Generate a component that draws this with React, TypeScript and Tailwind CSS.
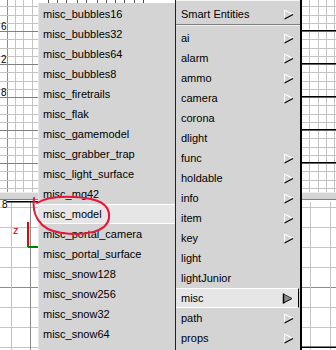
const LEFT_ITEMS = [
  "misc_bubbles16",
  "misc_bubbles32",
  "misc_bubbles64",
  "misc_bubbles8",
  "misc_firetrails",
  "misc_flak",
  "misc_gamemodel",
  "misc_grabber_trap",
  "misc_light_surface",
  "misc_mg42",
  "misc_model",
  "misc_portal_camera",
  "misc_portal_surface",
  "misc_snow128",
  "misc_snow256",
  "misc_snow32",
  "misc_snow64",
];

const RIGHT_ITEMS: { label: string; sub: boolean }[] = [
  { label: "ai", sub: true },
  { label: "alarm", sub: true },
  { label: "ammo", sub: true },
  { label: "camera", sub: true },
  { label: "corona", sub: false },
  { label: "dlight", sub: false },
  { label: "func", sub: true },
  { label: "holdable", sub: true },
  { label: "info", sub: true },
  { label: "item", sub: true },
  { label: "key", sub: true },
  { label: "light", sub: false },
  { label: "lightJunior", sub: false },
  { label: "misc", sub: true },
  { label: "path", sub: true },
  { label: "props", sub: true },
];

const fineY = Array.from({ length: 24 }, (_, k) => Math.round(6.25 + 8.25 * k)).filter((y) => y < 192);
const majorY = [31, 64, 97, 130, 163];
const lowerY = [207, 227, 247, 267, 287, 307, 327, 347];

function Arrow({ active }: { active?: boolean }) {
  if (active) {
    return (
      <svg width="11" height="11" viewBox="0 0 11 11" className="shrink-0">
        <path d="M1.5 1 L10 5.5 L1.5 10 Z" fill="#8c8c8c" />
        <path d="M1.5 0.5 V10.5" stroke="#000" strokeWidth="1.5" />
        <path d="M1.5 10 L10 5.5" stroke="#000" strokeWidth="1" />
        <path d="M1.5 1 L10 5.5" stroke="#303030" strokeWidth="1" />
      </svg>
    );
  }
  return (
    <svg width="11" height="11" viewBox="0 0 11 11" className="shrink-0">
      <path d="M1.5 1 V10" stroke="#ffffff" strokeWidth="1" />
      <path d="M1.5 1 L10 5.5" stroke="#ffffff" strokeWidth="1.1" />
      <path d="M1.5 10 L10 5.5" stroke="#000" strokeWidth="1.3" />
    </svg>
  );
}

function Viewports() {
  return (
    <svg width="336" height="350" className="absolute inset-0" style={{ fontFamily: "'Liberation Sans', Arial, sans-serif" }}>
      <rect width="336" height="350" fill="#fff" />
      {/* upper view, left strip */}
      {[15, 23, 32].map((x) => (
        <line key={"lv" + x} x1={x + 0.5} y1="0" x2={x + 0.5} y2="192" stroke="#c4c4c4" />
      ))}
      <line x1="7.5" y1="0" x2="7.5" y2="192" stroke="#8c8c8c" />
      {fineY.map((y) => (
        <line key={"lh" + y} x1="0" y1={y + 0.5} x2="38" y2={y + 0.5} stroke="#c4c4c4" />
      ))}
      {majorY.map((y) => (
        <line key={"lm" + y} x1="0" y1={y + 0.5} x2="38" y2={y + 0.5} stroke="#808080" />
      ))}
      <text x="1" y="30" fontSize="10" fill="#000">6</text>
      <text x="1" y="63" fontSize="10" fill="#000">2</text>
      <text x="1" y="96" fontSize="10" fill="#000">8</text>
      {/* top ruler ticks */}
      {[48, 57, 66, 77, 86, 97, 106, 115, 124, 134].map((x) => (
        <line key={"t" + x} x1={x + 0.5} y1="0" x2={x + 0.5} y2="3" stroke="#555" />
      ))}
      <line x1="143.5" y1="0" x2="143.5" y2="3" stroke="#2040ff" />
      {/* upper view, right strip */}
      {[309, 318, 326, 334].map((x) => (
        <line key={"rv" + x} x1={x + 0.5} y1="0" x2={x + 0.5} y2="192" stroke="#c4c4c4" />
      ))}
      {fineY.map((y) => (
        <line key={"rh" + y} x1="300" y1={y + 0.5} x2="336" y2={y + 0.5} stroke="#c4c4c4" />
      ))}
      {[30, 63, 96, 129, 162].map((y) => (
        <rect key={"rm" + y} x="300" y={y} width="36" height="1.5" fill="#000" />
      ))}
      {/* splitter */}
      <rect x="0" y="192" width="336" height="8" fill="#d4d4d4" />
      <line x1="0" y1="192.5" x2="336" y2="192.5" stroke="#f0f0f0" />
      <line x1="0" y1="199.5" x2="336" y2="199.5" stroke="#808080" />
      {/* lower view */}
      {lowerY.map((y) => (
        <line key={"bh" + y} x1="0" y1={y + 0.5} x2="336" y2={y + 0.5} stroke={y === 287 ? "#8c8c8c" : "#c4c4c4"} />
      ))}
      <line x1="11.5" y1="202" x2="11.5" y2="350" stroke="#c4c4c4" />
      <line x1="30.5" y1="202" x2="30.5" y2="350" stroke="#8c8c8c" />
      <line x1="310.5" y1="202" x2="310.5" y2="350" stroke="#c4c4c4" />
      <line x1="330.5" y1="202" x2="330.5" y2="350" stroke="#c4c4c4" />
      <rect x="7" y="201" width="31" height="1.5" fill="#000" />
      <rect x="300" y="346.5" width="36" height="1.5" fill="#000" />
      <text x="2" y="208" fontSize="10" fill="#000">8</text>
      <text x="13" y="234" fontSize="11" fill="#e00000">z</text>
      <rect x="27" y="222" width="2" height="25" fill="#f00000" />
      <rect x="28" y="246" width="10" height="2" fill="#008000" />
    </svg>
  );
}

export default function App() {
  return (
    <div
      className="relative w-[336px] h-[350px] overflow-hidden bg-white text-[11px] text-black"
      style={{ fontFamily: "'Liberation Sans', Arial, sans-serif" }}
    >
      <Viewports />

      {/* entity list submenu */}
      <div className="absolute left-[38px] top-[3px] bottom-0 w-[140px] bg-[#d4d4d4] border-l border-[#e8e8e8] pt-px">
        {LEFT_ITEMS.map((item) =>
          item === "misc_model" ? (
            <div
              key={item}
              className="h-[20px] leading-[18px] pl-[4px] bg-[#e6e6e6] border-t border-white border-b border-black"
            >
              {item}
            </div>
          ) : (
            <div key={item} className="h-[20px] leading-[20px] pl-[4px]">
              {item}
            </div>
          )
        )}
      </div>

      {/* category menu */}
      <div className="absolute left-[175px] top-0 bottom-0 w-[127px] bg-[#d4d4d4] border-l border-[#202020] border-r-2 border-r-black">
        <div className="h-[4px] border-t border-[#f4f4f4]" />
        <div className="flex h-[20px] items-center justify-between pl-[5px] pr-[6px]">
          <span>Smart Entities</span>
          <Arrow />
        </div>
        <div className="h-[4px] border-t border-[#808080]">
          <div className="h-px bg-[#f0f0f0]" />
        </div>
        {RIGHT_ITEMS.map((it) =>
          it.label === "misc" ? (
            <div
              key={it.label}
              className="flex h-[20px] items-center justify-between pl-[5px] pr-[5px] mr-[1px] bg-[#e6e6e6] border-t border-white border-b border-black border-r border-r-black"
            >
              <span>{it.label}</span>
              <Arrow active />
            </div>
          ) : (
            <div key={it.label} className="flex h-[20px] items-center justify-between pl-[5px] pr-[6px]">
              <span>{it.label}</span>
              {it.sub && <Arrow />}
            </div>
          )
        )}
      </div>

      {/* red annotation loop */}
      <svg width="336" height="350" className="absolute inset-0 pointer-events-none">
        <path
          d="M34 198 C32 212 37 230 62 233 C85 236 107 232 109 218 C111 203 96 198 74 197 C58 196 45 198 37 203"
          fill="none"
          stroke="#e8163c"
          strokeWidth="2"
          strokeLinecap="round"
        />
      </svg>
    </div>
  );
}
